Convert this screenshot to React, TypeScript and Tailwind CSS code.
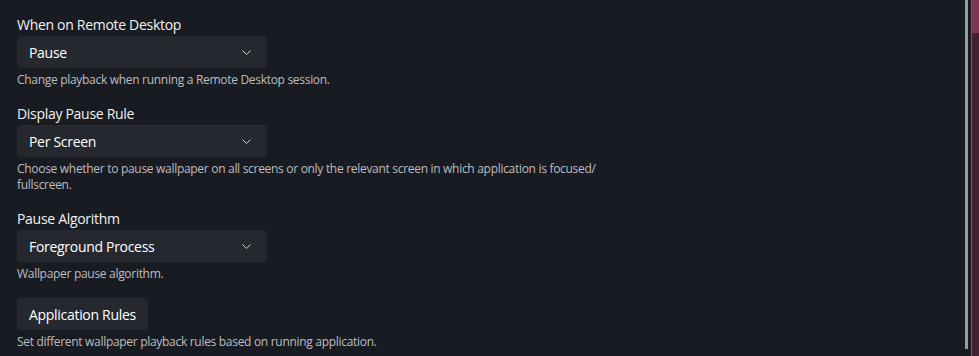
import React from "react";

// Small thin chevron used on the dropdowns
const Chevron = () => (
  <svg width="9" height="5" viewBox="0 0 9 5" fill="none" className="text-[#cfcfd2]">
    <polyline points="0.5,0.5 4.5,4.5 8.5,0.5" stroke="currentColor" strokeWidth="1" />
  </svg>
);

interface SelectRowProps {
  label: string;
  value: string;
  description: React.ReactNode;
}

const SelectRow: React.FC<SelectRowProps> = ({ label, value, description }) => (
  <div className="flex flex-col">
    <p className="text-[14px] leading-[20px] text-[#f2f2f2]">{label}</p>
    <div className="mt-px flex h-[32px] w-[250px] items-center justify-between rounded-[4px] bg-[#26282f] pl-[12px] pr-[16px]">
      <span className="text-[14px] text-white">{value}</span>
      <Chevron />
    </div>
    <p className="mt-[4px] max-w-[612px] text-[12px] leading-[16px] text-[#bdbdc0]">{description}</p>
  </div>
);

export default function App() {
  return (
    <div
      className="flex h-[356px] w-[979px] overflow-hidden bg-[#191b22] tracking-[-0.3px]"
      style={{ fontFamily: '"Segoe UI", "Open Sans", "Noto Sans", sans-serif' }}
    >
      <div className="flex flex-1 flex-col gap-[16px] pl-[17px] pt-[15px]">
        <SelectRow
          label="When on Remote Desktop"
          value="Pause"
          description="Change playback when running a Remote Desktop session."
        />
        <SelectRow
          label="Display Pause Rule"
          value="Per Screen"
          description="Choose whether to pause wallpaper on all screens or only the relevant screen in which application is focused/ fullscreen."
        />
        <SelectRow
          label="Pause Algorithm"
          value="Foreground Process"
          description="Wallpaper pause algorithm."
        />
        <div className="flex flex-col">
          <div className="flex h-[32px] w-fit items-center rounded-[4px] bg-[#26282f] px-[12px]">
            <span className="text-[14px] text-white">Application Rules</span>
          </div>
          <p className="mt-[4px] text-[12px] leading-[16px] text-[#bdbdc0]">
            Set different wallpaper playback rules based on running application.
          </p>
        </div>
      </div>
      {/* scrollbar */}
      <div className="mb-[7px] w-[3px] bg-[#9b9b9e]" />
      <div className="w-[3px]" />
      <div className="w-px bg-[#7c3aed]" />
      <div className="flex w-[7px] flex-col">
        <div className="h-[33px] bg-[#7e3654]" />
        <div className="flex-1 bg-[#43202f]" />
      </div>
    </div>
  );
}
